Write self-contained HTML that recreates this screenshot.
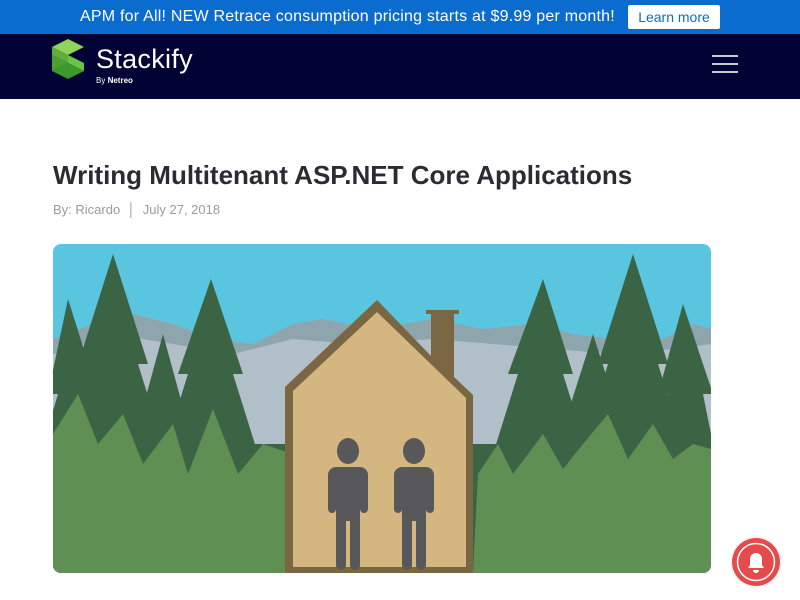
<!DOCTYPE html>
<html><head><meta charset="utf-8"><style>
*{margin:0;padding:0;box-sizing:border-box}
body{width:800px;height:600px;overflow:hidden;background:#fff;font-family:"Liberation Sans",sans-serif;position:relative}
.top{height:34px;background:#0a6ccf;color:#fff;font-size:16px;position:relative}
.top span{position:absolute;left:80px;top:8px;letter-spacing:0.22px;white-space:nowrap}
.btn{position:absolute;left:628px;top:5px;width:92px;height:24px;background:#fff;color:#0a6ccf;font-size:14px;text-align:center;line-height:24px;border-radius:2px}
.nav{height:65px;background:#000333;position:relative}
.title{position:absolute;left:53px;top:160px;font-size:26px;color:#2b2b33;font-weight:bold;letter-spacing:0px;white-space:nowrap}
.meta{position:absolute;left:53px;top:202px;font-size:13px;color:#9a9aa0}
</style></head><body>
<div class="top"><span>APM for All! NEW Retrace consumption pricing starts at $9.99 per month!</span><div class="btn">Learn more</div></div>
<div class="nav">
<svg style="position:absolute;left:52px;top:5px" width="34" height="42" viewBox="0 0 34 42">
<polygon points="16,0 32,8 16,16 0,8" fill="#8fd45a"/>
<polygon points="0,8 16,16 16,24 0,16" fill="#5fae3a"/>
<polygon points="16,16 32,24 32,32 16,24" fill="#6cc447"/>
<polygon points="16,24 32,32 16,40 0,32" fill="#3a9a2a"/>
<polygon points="0,16 16,24 0,32" fill="#4e9f33"/>
</svg>
<div style="position:absolute;left:96px;top:10px;color:#fff;font-size:27px;font-weight:300;letter-spacing:0.3px">Stackify</div>
<div style="position:absolute;left:96px;top:42px;color:#fff;font-size:8px">By <b>Netreo</b></div>
<div style="position:absolute;left:712px;top:21px;width:26px">
<div style="height:2px;background:#c8c8d0;margin-bottom:6px"></div>
<div style="height:2px;background:#c8c8d0;margin-bottom:6px"></div>
<div style="height:2px;background:#c8c8d0"></div></div>
</div>
<div class="title">Writing Multitenant ASP.NET Core Applications</div>
<div class="meta">By: Ricardo &nbsp;│&nbsp; July 27, 2018</div>
<svg style="position:absolute;left:53px;top:244px" width="658" height="329" viewBox="0 0 658 329">
<defs><clipPath id="c"><rect width="658" height="329" rx="8"/></clipPath></defs>
<g clip-path="url(#c)">
<rect width="658" height="329" fill="#5ac5de"/>
<path d="M0,95 L40,80 80,70 120,80 160,95 200,100 240,80 270,75 320,85 380,75 430,85 480,80 520,90 560,95 600,100 640,80 658,85 L658,329 0,329Z" fill="#8fa5ad"/>
<path d="M0,110 L60,90 120,100 180,110 240,95 300,100 380,95 440,100 500,105 560,110 620,105 658,100 L658,329 0,329Z" fill="#b0bfc8"/>
<g fill="#3b6445">
<path d="M60,10 L95,120 85,120 110,200 100,200 125,300 0,300 20,200 10,200 35,120 25,120Z"/>
<path d="M158,35 L190,130 180,130 205,210 195,210 225,300 95,300 120,210 110,210 135,130 125,130Z"/>
<path d="M15,55 L45,150 35,150 60,250 -25,250 5,150 -5,150Z"/>
<path d="M110,90 L140,200 80,200Z"/>
<path d="M490,35 L520,130 510,130 535,210 525,210 555,300 425,300 450,210 440,210 465,130 455,130Z"/>
<path d="M580,10 L615,120 605,120 630,200 620,200 650,300 510,300 540,200 530,200 555,120 545,120Z"/>
<path d="M630,60 L660,150 650,150 670,250 600,250 615,150 605,150Z"/>
<path d="M540,90 L575,200 505,200Z"/>
<rect x="0" y="200" width="240" height="129"/>
<rect x="420" y="200" width="238" height="129"/>
</g>
<g fill="#5f8f52">
<path d="M0,190 L25,150 45,200 70,170 90,220 120,180 135,230 160,165 185,230 210,200 240,210 240,329 0,329Z"/>
<path d="M420,329 L425,230 445,200 460,230 490,190 510,225 530,200 555,170 575,215 600,180 620,215 640,200 658,205 L658,329Z"/>
</g>
<path d="M232,329 L232,143 324,56 378,112 378,70 373,70 373,66 406,66 406,70 401,70 401,133 420,151 420,329Z" fill="#7a6642"/>
<path d="M240,329 L240,147 324,68 413,154 413,323 240,323Z" fill="#d4b680"/>
<g fill="#58585b">
<ellipse cx="295" cy="207" rx="11" ry="13"/>
<path d="M283,223 h24 a8,8 0 0 1 8,8 v34 a4,4 0 0 1 -8,0 v-28 v84 a5,5 0 0 1 -10,0 v-44 h-4 v44 a5,5 0 0 1 -10,0 v-84 v28 a4,4 0 0 1 -8,0 v-34 a8,8 0 0 1 8,-8z"/>
<ellipse cx="361" cy="207" rx="11" ry="13"/>
<path d="M349,223 h24 a8,8 0 0 1 8,8 v34 a4,4 0 0 1 -8,0 v-28 v84 a5,5 0 0 1 -10,0 v-44 h-4 v44 a5,5 0 0 1 -10,0 v-84 v28 a4,4 0 0 1 -8,0 v-34 a8,8 0 0 1 8,-8z"/>
</g>
</g></svg>
<svg style="position:absolute;left:728px;top:534px" width="56" height="56" viewBox="0 0 56 56">
<circle cx="28" cy="28" r="26" fill="#eee" opacity=".6"/>
<circle cx="28" cy="28" r="24" fill="#e54b4d"/>
<circle cx="28" cy="28" r="18.5" fill="none" stroke="#fff" stroke-width="1.5"/>
<path d="M20,34 h16 l-2,-3 v-6 a6,6 0 0 0 -12,0 v6z" fill="#fff"/>
<path d="M25,36 a3,3 0 0 0 6,0z" fill="#fff"/>
</svg>
</body></html>
